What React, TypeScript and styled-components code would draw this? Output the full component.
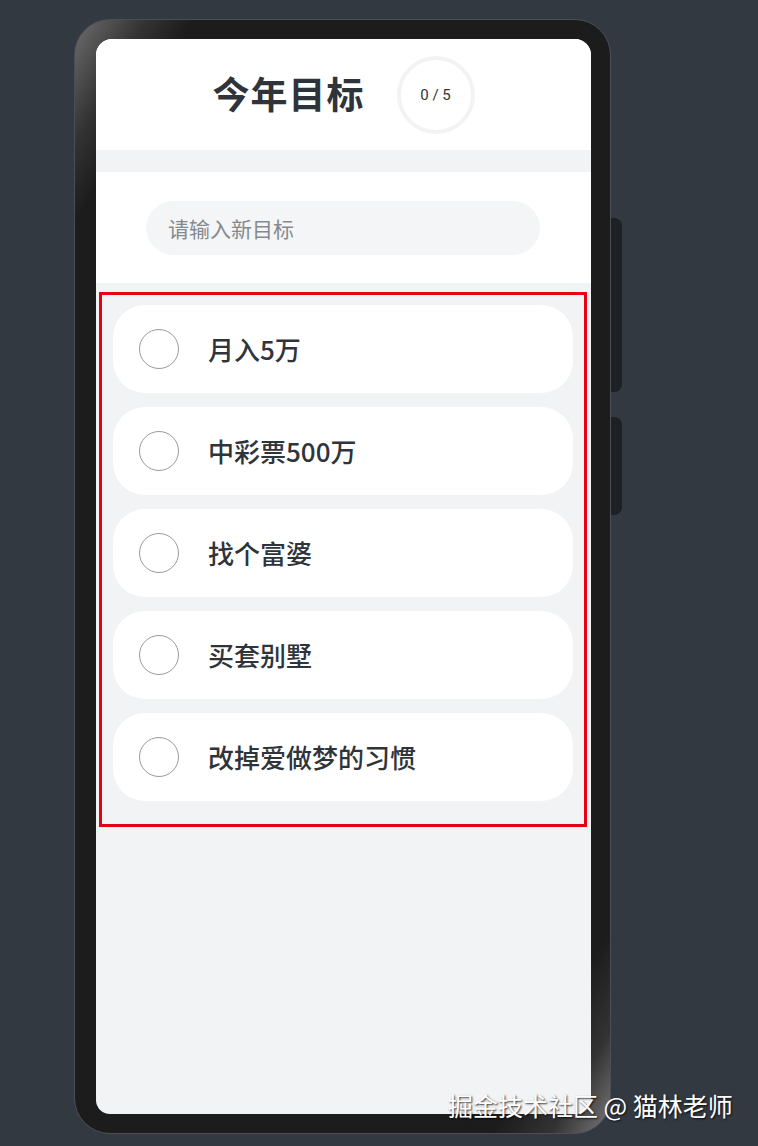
import React from "react";
import styled, { createGlobalStyle } from "styled-components";

const GlobalStyle = createGlobalStyle`
  html, body {
    margin: 0;
    padding: 0;
    background: #333941;
  }
  body {
    font-family: "Noto Sans CJK SC", "Noto Sans", sans-serif;
  }
`;

const Page = styled.div`
  width: 758px;
  height: 1146px;
  padding: 19px 0 0 74px;
  box-sizing: border-box;
  background: #333941;
  position: relative;
`;

const Phone = styled.div`
  position: relative;
  width: 537px;
  height: 1115px;
  box-sizing: border-box;
  padding: 19px 19px 19px 21px;
  border-radius: 36px;
  border: 1px solid #4b4f55;
  background: linear-gradient(
    120deg,
    #6e6e6e 0%,
    #333 6%,
    #1c1c1c 10%,
    #1c1c1c 90%,
    #333 95%,
    #7a7a7a 100%
  );
`;

const SideButton = styled.div<{ $top: number; $height: number }>`
  position: absolute;
  right: -12px;
  top: ${(p) => p.$top}px;
  width: 11px;
  height: ${(p) => p.$height}px;
  background: #1d2024;
  border-radius: 0 8px 8px 0;
`;

const Screen = styled.div`
  width: 100%;
  height: 100%;
  background: #f2f3f5;
  border-radius: 16px 16px 14px 14px;
  overflow: hidden;
  display: flex;
  flex-direction: column;
`;

const Header = styled.div`
  height: 111px;
  background: #ffffff;
  display: flex;
  align-items: center;
  justify-content: center;
  gap: 32px;
  flex-shrink: 0;
`;

const Title = styled.h1`
  margin: -3px 0 0;
  font-size: 37px;
  font-weight: 700;
  color: #2e343a;
  letter-spacing: 1px;
`;

const Counter = styled.div`
  width: 78px;
  height: 78px;
  box-sizing: border-box;
  border-radius: 50%;
  border: 4px solid #f3f3f3;
  display: flex;
  align-items: center;
  justify-content: center;
  font-family: "Roboto", "Noto Sans", sans-serif;
  font-size: 15px;
  color: #333;
`;

const InputSection = styled.div`
  margin-top: 22px;
  height: 111px;
  background: #ffffff;
  display: flex;
  align-items: center;
  padding: 0 51px 0 50px;
  flex-shrink: 0;
`;

const Input = styled.input`
  width: 100%;
  height: 54px;
  border: none;
  outline: none;
  border-radius: 27px;
  background: #f4f5f6;
  padding: 0 22px;
  box-sizing: border-box;
  font-family: "Noto Sans CJK SC", sans-serif;
  font-size: 21px;
  color: #333;

  &::placeholder {
    color: #858a8f;
  }
`;

const List = styled.div`
  margin: 9px 4px 0 3px;
  border: 3px solid #e60012;
  padding: 10px 11px 23px 11px;
  display: flex;
  flex-direction: column;
  gap: 14px;
`;

const Item = styled.div`
  height: 88px;
  background: #ffffff;
  border-radius: 32px;
  display: flex;
  align-items: center;
  padding-left: 26px;
  gap: 29px;
`;

const Check = styled.div`
  width: 40px;
  height: 40px;
  box-sizing: border-box;
  border-radius: 50%;
  border: 1px solid #9a9a9a;
  flex-shrink: 0;
`;

const ItemText = styled.span`
  font-size: 26px;
  font-weight: 500;
  color: #2f343a;
  margin-top: -1px;
`;

const Watermark = styled.div`
  position: absolute;
  left: 448px;
  top: 1087px;
  font-size: 25px;
  color: #ffffff;
  text-shadow: 1px 1px 2px rgba(0, 0, 0, 0.8);
  white-space: nowrap;
`;

const goals = ["月入5万", "中彩票500万", "找个富婆", "买套别墅", "改掉爱做梦的习惯"];

const App: React.FC = () => {
  return (
    <>
      <GlobalStyle />
      <Page>
        <Phone>
          <SideButton $top={198} $height={174} />
          <SideButton $top={397} $height={98} />
          <Screen>
            <Header>
              <Title>今年目标</Title>
              <Counter>0 / {goals.length}</Counter>
            </Header>
            <InputSection>
              <Input placeholder="请输入新目标" />
            </InputSection>
            <List>
              {goals.map((goal, index) => (
                <Item key={index}>
                  <Check />
                  <ItemText>{goal}</ItemText>
                </Item>
              ))}
            </List>
          </Screen>
        </Phone>
        <Watermark>掘金技术社区 @ 猫林老师</Watermark>
      </Page>
    </>
  );
};

export default App;
